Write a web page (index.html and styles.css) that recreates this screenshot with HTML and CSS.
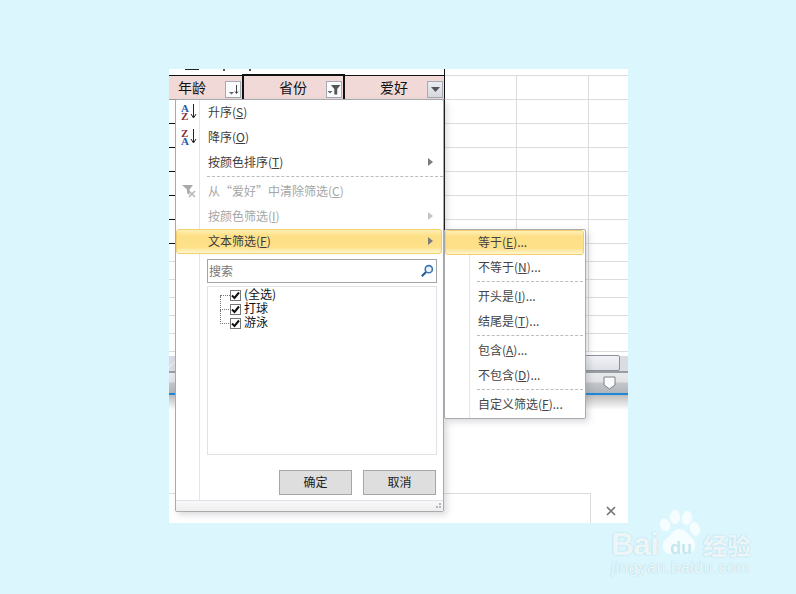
FILE: index.html
```html
<!DOCTYPE html>
<html lang="zh-CN">
<head>
  <meta charset="UTF-8" />
  <title>文本筛选</title>
  <link rel="stylesheet" href="styles.css">
</head>
<body>
  <div class="shot">
    <!-- worksheet behind the menus -->
    <div class="sheet">
      <div class="title-strip">
        <span class="title-mark"></span><span class="title-dot"></span><span class="title-dot"></span>
      </div>
      <div class="header-row">
        <div class="head-group">
          <div class="head-cell head-age">
            <span class="head-text">年龄</span>
            <span class="filter-btn">
              <svg width="13" height="13" viewBox="0 0 13 13"><path d="M2 9h5l-2.500 2.500z" fill="#666"/><path d="M9.500 2v8M8 8.500l1.500 2 1.500-2" stroke="#444" fill="none"/></svg>
            </span>
          </div>
          <div class="head-cell head-province">
            <span class="head-text">省份</span>
            <span class="filter-btn filter-on">
              <svg width="14" height="13" viewBox="0 0 14 13"><path d="M4 2h9.500L10.200 6v5.500H7.300V6z" fill="#555"/><path d="M0.500 8h5L3 10.500z" fill="#666"/></svg>
            </span>
          </div>
          <div class="head-cell head-hobby">
            <span class="head-text">爱好</span>
            <span class="filter-btn filter-open">
              <svg width="9" height="5" viewBox="0 0 9 5"><path d="M0 0h9L4.500 5z" fill="#555"/></svg>
            </span>
          </div>
        </div>
        <div class="head-blank"></div>
        <div class="head-blank"></div>
        <div class="head-blank head-last"></div>
      </div>
      <div class="row row-tall row-dark"><i></i><i></i><i></i><i></i></div>
      <div class="row row-tall row-dark"><i></i><i></i><i></i><i></i></div>
      <div class="row row-tall row-dark"><i></i><i></i><i></i><i></i></div>
      <div class="row row-tall row-dark"><i></i><i></i><i></i><i></i></div>
      <div class="row row-tall row-dark"><i></i><i></i><i></i><i></i></div>
      <div class="row row-tall row-dark"><i></i><i></i><i></i><i></i></div>
      <div class="row"><i></i><i></i><i></i><i></i></div>
      <div class="row"><i></i><i></i><i></i><i></i></div>
      <div class="row"><i></i><i></i><i></i><i></i></div>
      <div class="row"><i></i><i></i><i></i><i></i></div>
      <div class="row"><i></i><i></i><i></i><i></i></div>
      <div class="row"><i></i><i></i><i></i><i></i></div>
      <div class="scroll-strip">
        <span class="scroll-tab"></span>
        <span class="scroll-thumb"></span>
      </div>
      <div class="status-bar">
        <svg class="zoom-thumb" width="13" height="14" viewBox="0 0 13 14"><path d="M1 1h11v8l-5.500 4L1 9z" fill="#fbfbfb" stroke="#7d8288"/></svg>
      </div>
      <div class="status-shade"></div>
      <div class="sheet-gap"></div>
      <div class="bottom-bar">
        <div class="bottom-box"></div>
        <div class="bottom-close">
          <svg width="10" height="10" viewBox="0 0 10 10"><path d="M1 1l8 8M9 1l-8 8" stroke="#777" stroke-width="1.700"/></svg>
        </div>
      </div>
    </div>

    <!-- filter dropdown -->
    <div class="menu main-menu">
      <div class="item">
        <span class="item-icon">
          <span class="sort-letters"><b class="l-blue">A</b><b class="l-red">Z</b></span>
          <svg width="7" height="15" viewBox="0 0 7 15"><path d="M3.500 0v13M1 10l2.500 4L6 10" stroke="#222" fill="none"/></svg>
        </span>
        <span>升序(<u>S</u>)</span>
      </div>
      <div class="item">
        <span class="item-icon">
          <span class="sort-letters"><b class="l-red">Z</b><b class="l-blue">A</b></span>
          <svg width="7" height="15" viewBox="0 0 7 15"><path d="M3.500 0v13M1 10l2.500 4L6 10" stroke="#222" fill="none"/></svg>
        </span>
        <span>降序(<u>O</u>)</span>
      </div>
      <div class="item">
        <span class="item-icon"></span>
        <span>按颜色排序(<u>T</u>)</span>
        <span class="arrow"></span>
      </div>
      <div class="sep"></div>
      <div class="item off">
        <span class="item-icon">
          <svg width="16" height="14" viewBox="0 0 16 14"><path d="M1 1h11L8.500 5.500V11L6 9V5.500z" fill="#a9a9a9"/><path d="M8 7l6 6M14 7l-6 6" stroke="#b5b5b5" stroke-width="1.500"/></svg>
        </span>
        <span>从“爱好”中清除筛选(<u>C</u>)</span>
      </div>
      <div class="item off">
        <span class="item-icon"></span>
        <span>按颜色筛选(<u>I</u>)</span>
        <span class="arrow"></span>
      </div>
      <div class="item active">
        <span class="item-icon"></span>
        <span>文本筛选(<u>F</u>)</span>
        <span class="arrow"></span>
      </div>

      <div class="search-box">
        <span class="search-label">搜索</span>
        <svg width="14" height="14" viewBox="0 0 14 14"><circle cx="8.800" cy="5.200" r="3.600" fill="#e8f2fb" stroke="#3f74b5" stroke-width="1.600"/><path d="M6 8L1.800 12.300" stroke="#2a5c9c" stroke-width="2.200"/></svg>
      </div>

      <div class="check-list">
        <div class="check-row tree-first">
          <span class="check"><svg width="9" height="9" viewBox="0 0 9 9"><path d="M1 4.500l2.500 2.500L8 1.500" stroke="#111" stroke-width="2" fill="none"/></svg></span>
          <span class="check-text">(全选)</span>
        </div>
        <div class="check-row">
          <span class="check"><svg width="9" height="9" viewBox="0 0 9 9"><path d="M1 4.500l2.500 2.500L8 1.500" stroke="#111" stroke-width="2" fill="none"/></svg></span>
          <span class="check-text">打球</span>
        </div>
        <div class="check-row">
          <span class="check"><svg width="9" height="9" viewBox="0 0 9 9"><path d="M1 4.500l2.500 2.500L8 1.500" stroke="#111" stroke-width="2" fill="none"/></svg></span>
          <span class="check-text">游泳</span>
        </div>
      </div>

      <div class="btn-row">
        <button class="btn">确定</button>
        <button class="btn">取消</button>
      </div>

      <div class="menu-foot">
        <svg width="8" height="8" viewBox="0 0 8 8"><path d="M5 1h2v2H5zM2 4h2v2H2zM5 4h2v2H5z" fill="#b4b8bc"/></svg>
      </div>
    </div>

    <!-- text filter submenu -->
    <div class="menu sub-menu">
      <div class="item active"><span>等于(<u>E</u>)...</span></div>
      <div class="item"><span>不等于(<u>N</u>)...</span></div>
      <div class="sep"></div>
      <div class="item"><span>开头是(<u>I</u>)...</span></div>
      <div class="item"><span>结尾是(<u>T</u>)...</span></div>
      <div class="sep"></div>
      <div class="item"><span>包含(<u>A</u>)...</span></div>
      <div class="item"><span>不包含(<u>D</u>)...</span></div>
      <div class="sep"></div>
      <div class="item"><span>自定义筛选(<u>F</u>)...</span></div>
    </div>
  </div>

  <!-- watermark -->
  <div class="watermark">
    <svg class="paw" width="46" height="50" viewBox="0 0 46 50">
      <ellipse cx="8" cy="17" rx="5" ry="6.500" transform="rotate(-20 8 17)"/>
      <ellipse cx="18" cy="9" rx="5" ry="7"/>
      <ellipse cx="30" cy="10" rx="5" ry="7" transform="rotate(10 30 10)"/>
      <ellipse cx="38" cy="21" rx="5" ry="7" transform="rotate(-20 38 21)"/>
      <path d="M22 21c6 0 8 4 13 9 6 6 3 16-6 16-5-1-9-1-14 0-10 0-12-9-6-15 5-3 7-10 13-10z"/>
    </svg>
    <div class="wm-top">
      <span class="wm-bai">Bai</span>
      <span class="wm-du">du</span>
      <span class="wm-cn">经验</span>
    </div>
    <div class="wm-url">jingyan.baidu.com</div>
  </div>
</body>
</html>
```

FILE: styles.css
```css
* { box-sizing: border-box; }
html, body {
  margin: 0;
  height: 594px;
  overflow: hidden;
}
body {
  background: #dcf6fe;
  padding: 69px 0 0 169px;
  font-family: "Noto Sans CJK SC", "Liberation Sans", sans-serif;
  font-size: 12px;
  color: #3c3c3c;
  position: relative;
}
.shot {
  position: relative;
  width: 459px;
  height: 454px;
  background: white;
  overflow: hidden;
}

/* worksheet */
.sheet {
  display: flex;
  flex-direction: column;
  height: 100%;
}
.title-strip {
  height: 6px;
  width: 276px;
  flex: none;
  display: flex;
  gap: 24px;
  padding-left: 16px;
  border-right: 1px solid #111;
}
.title-mark {
  width: 14px;
  height: 1px;
  background: #222;
}
.title-dot {
  width: 2px;
  height: 2px;
  background: #555;
}
.header-row {
  display: flex;
  height: 25px;
  flex: none;
}
.head-group {
  display: flex;
  width: 276px;
  flex: none;
  border-top: 1px solid #111;
  border-bottom: 1px solid #999;
  border-right: 1px solid #111;
  background: #f0d9d7;
  color: #111;
  font-size: 14px;
}
.head-blank {
  width: 72px;
  border-top: 1px solid #dcdcdc;
  border-bottom: 1px solid #dcdcdc;
  border-right: 1px solid #dcdcdc;
}
.head-last {
  flex: 1;
  border-right: none;
}
.head-cell {
  display: flex;
  align-items: center;
  height: 100%;
}
.head-text { padding-bottom: 1px; }
.head-age {
  width: 73px;
  padding: 0 1px 0 9px;
}
.head-province {
  width: 103px;
  margin-top: -2px;
  height: 26px;
  padding: 0 1px 0 35px;
  border: 1px solid #111;
  border-left-width: 2px;
  border-right-width: 2px;
}
.head-hobby {
  width: 99px;
  padding: 0 1px 0 35px;
}
.filter-btn {
  margin-left: auto;
  width: 16px;
  height: 17px;
  border: 1px solid #a7abb1;
  background: #fafbfc;
  display: flex;
  align-items: center;
  justify-content: center;
  flex: none;
  margin-top: 4px;
}
.filter-open {
  background: linear-gradient(#e9ecf1, #d6dae0);
}
.row {
  display: flex;
  height: 18px;
  flex: none;
}
.row-tall { height: 24px; }
.row i {
  display: block;
  border-bottom: 1px solid #dcdcdc;
  border-right: 1px solid #dcdcdc;
}
.row i:nth-child(1) { width: 276px; border-right-color: #111; }
.row i:nth-child(2) { width: 72px; }
.row i:nth-child(3) { width: 72px; }
.row i:nth-child(4) { flex: 1; border-right: none; }
.row-dark i:nth-child(1) { border-bottom-color: #111; }
.scroll-strip {
  height: 21px;
  flex: none;
  display: flex;
  align-items: flex-end;
  background: linear-gradient(white 4px, #d9dce1 4px);
  border-bottom: 2px solid #9a9da2;
}
.scroll-tab {
  width: 7px;
  height: 14px;
  background: linear-gradient(135deg, #d9dce1 45%, #f4f4f4 50%, #d9dce1 55%);
}
.scroll-thumb {
  margin-left: auto;
  margin-right: 8px;
  width: 200px;
  height: 16px;
  background: linear-gradient(#f2f3f6, #dde0e7);
  border: 1px solid #8c9199;
  border-radius: 2px;
}
.status-bar {
  height: 22px;
  flex: none;
  display: flex;
  justify-content: flex-end;
  align-items: flex-start;
  padding: 3px 12px 0 0;
  background: linear-gradient(#e8eaec, #dfe1e4 45%, #c3c6ca 50%, #b2b5ba);
  border-bottom: 2px solid #1c88dc;
}
.status-shade {
  height: 15px;
  flex: none;
  background: linear-gradient(#bdbdbd, white);
}
.sheet-gap { flex: 1; }
.bottom-bar {
  height: 30px;
  flex: none;
  display: flex;
}
.bottom-box {
  width: 422px;
  border-top: 1px solid #dcdcdc;
  border-right: 1px solid #dcdcdc;
}
.bottom-close {
  flex: 1;
  display: flex;
  align-items: center;
  justify-content: center;
  padding: 6px 0 0 3px;
}

/* menus */
.menu {
  position: absolute;
  background-color: white;
  border: 1px solid #a7abb0;
  border-radius: 2px;
  box-shadow: 3px 3px 6px rgba(90, 90, 110, 0.22);
  display: flex;
  flex-direction: column;
  background-repeat: no-repeat;
  background-image: linear-gradient(#e5e5e5, #e5e5e5);
}
.main-menu {
  left: 6px;
  top: 30px;
  width: 269px;
  height: 413px;
  background-position: 23px 0;
  background-size: 1px 100%;
}
.sub-menu {
  left: 275px;
  top: 160px;
  width: 142px;
  height: 190px;
  background-position: 24px 0;
  background-size: 1px 100%;
  color: #444;
}
.item {
  height: 25px;
  flex: none;
  display: flex;
  align-items: center;
  padding-right: 8px;
  padding-bottom: 2px;
  border: 1px solid transparent;
  border-radius: 3px;
  margin-right: 1px;
}
.item u { text-underline-offset: 1px; }
.main-menu .item { padding-left: 1px; }
.sub-menu .item { padding-left: 32px; }
.item-icon {
  width: 22px;
  margin-right: 8px;
  flex: none;
  display: flex;
  align-items: center;
  justify-content: center;
  gap: 1px;
}
.off { color: #a6a6a6; }
.active {
  border-color: #f3cf6c;
  background: linear-gradient(#fff0b8, #fddf85 25%, #fee08a 75%, #fff6cf);
}
.arrow {
  margin-left: auto;
  width: 0;
  height: 0;
  border-left: 5px solid #7c7c7c;
  border-top: 4px solid transparent;
  border-bottom: 4px solid transparent;
}
.off .arrow { border-left-color: #c4c4c4; }
.sep {
  flex: none;
  margin-top: 1px;
  height: 3px;
  margin-left: 31px;
  border-top: 1px dashed #bcbcbc;
}
.sub-menu .sep { margin-left: 32px; margin-right: 2px; }
.sort-letters {
  display: flex;
  flex-direction: column;
  font-family: "Liberation Serif", serif;
  font-size: 11px;
  line-height: 8px;
}
.l-blue { color: #2a5ba8; }
.l-red { color: #8e2f38; }

/* search and check list */
.search-box {
  margin: 5px 6px 0 31px;
  height: 24px;
  flex: none;
  border: 1px solid #a5a5a5;
  background: white;
  display: flex;
  align-items: center;
  justify-content: space-between;
  padding: 0 2px 0 1px;
  color: #777;
}
.search-label { padding-bottom: 2px; }
.check-list {
  margin: 3px 6px 0 31px;
  height: 169px;
  flex: none;
  border: 1px solid #e0e2e4;
  background: white;
  padding: 0 0 0 22px;
  color: #111;
}
.check-row {
  height: 14px;
  display: flex;
  align-items: center;
  gap: 3px;
  position: relative;
  line-height: 14px;
}
.check-text { margin-top: -2px; }
.check-row:before {
  content: "";
  position: absolute;
  left: -10px;
  top: -6px;
  height: 13px;
  width: 10px;
  border-left: 1px dotted #777;
  border-bottom: 1px dotted #777;
}
.tree-first { margin-top: 1px; }
.tree-first:before {
  top: 6px;
  height: 1px;
  border-left: none;
}
.check {
  width: 11px;
  height: 11px;
  flex: none;
  border: 1px solid #777;
  background: white;
  display: flex;
  align-items: center;
  justify-content: center;
}
.btn-row {
  margin: 15px 7px 0 0;
  display: flex;
  justify-content: flex-end;
  gap: 11px;
}
.btn {
  width: 73px;
  height: 25px;
  background: #dedede;
  border: 1px solid #a6a6a6;
  font: inherit;
  color: #222;
  padding: 0 0 2px;
}
.menu-foot {
  margin-top: auto;
  height: 11px;
  border-top: 1px solid #dde3e8;
  background: linear-gradient(#f8f8f8, #eeeeee);
  display: flex;
  justify-content: flex-end;
  align-items: flex-end;
  padding: 0 1px 1px 0;
}

/* watermark */
.watermark {
  position: absolute;
  left: 610px;
  top: 506px;
  width: 150px;
  height: 72px;
  color: rgba(255, 255, 255, 0.8);
}
.paw {
  position: absolute;
  left: 47px;
  top: 2px;
  fill: rgba(255, 255, 255, 0.75);
}
.wm-top {
  position: absolute;
  left: 1px;
  top: 20px;
  display: flex;
  align-items: center;
  text-shadow: 0 0 1px #a9d4df, 0 0 2px #bfe3ec;
}
.wm-bai {
  font: bold 32px "Liberation Sans", sans-serif;
  width: 54px;
  letter-spacing: -1px;
}
.wm-du {
  font: bold 18px "Liberation Sans", sans-serif;
  color: #c6e7ef;
  text-shadow: none;
  width: 38px;
  padding: 8px 0 0 5px;
}
.wm-cn {
  font-size: 24px;
  font-weight: bold;
  line-height: 30px;
}
.wm-url {
  position: absolute;
  left: 1px;
  top: 53px;
  font: 16px "Liberation Sans", sans-serif;
  letter-spacing: 0.6px;
  text-shadow: 0 0 1px #a9d4df, 0 0 2px #bfe3ec;
  white-space: nowrap;
}
```
